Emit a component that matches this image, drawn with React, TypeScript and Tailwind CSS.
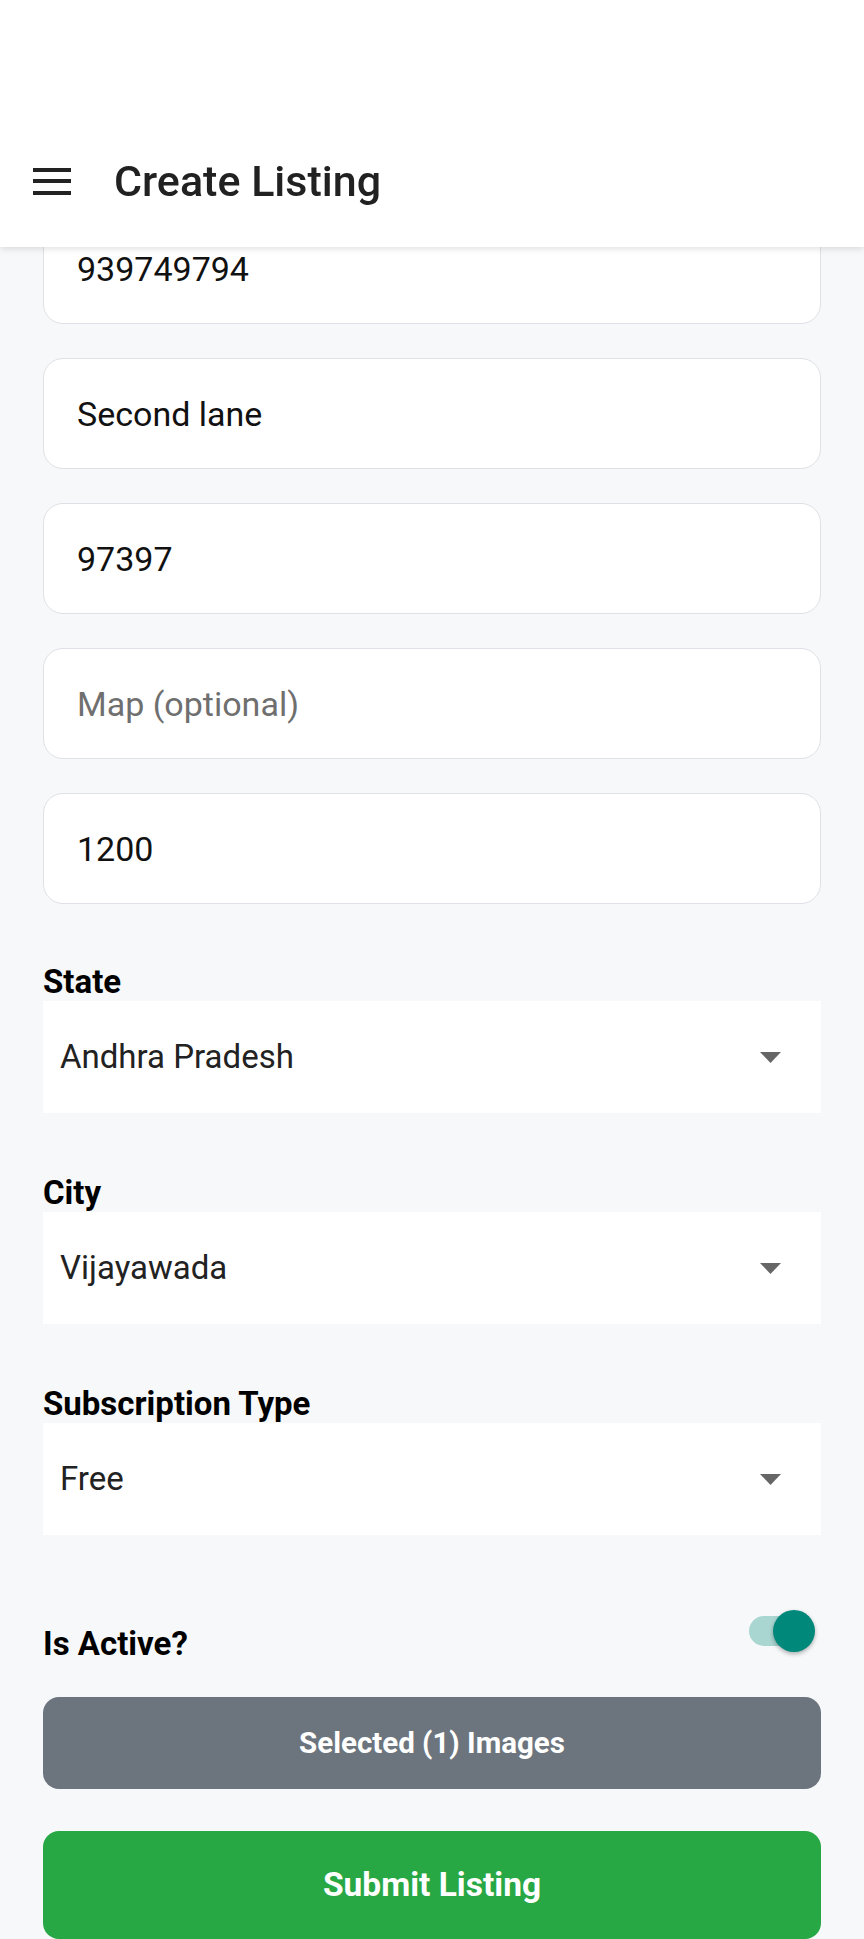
import React from "react";

const inputs = [
  { value: "939749794", placeholder: "Phone" },
  { value: "Second lane", placeholder: "Address" },
  { value: "97397", placeholder: "Pincode" },
  { value: "", placeholder: "Map (optional)" },
  { value: "1200", placeholder: "Price" },
];

const selects = [
  { label: "State", value: "Andhra Pradesh" },
  { label: "City", value: "Vijayawada" },
  { label: "Subscription Type", value: "Free" },
];

function Picker({ label, value }: { label: string; value: string }) {
  return (
    <div className="flex flex-col">
      <label className="h-[39px] text-[33px] leading-[39px] font-bold text-black">
        {label}
      </label>
      <div className="flex h-[112px] items-center justify-between bg-white pl-[17px] pr-[40px]">
        <span className="text-[33px] text-[#222222]">{value}</span>
        <svg width="21" height="11" viewBox="0 0 21 11">
          <path d="M0 0h21L10.5 11z" fill="#666666" />
        </svg>
      </div>
    </div>
  );
}

export default function App() {
  return (
    <div className="relative min-h-[1939px] w-full bg-[#f7f8fa] font-['Roboto',sans-serif]">
      {/* app bar sits over the scrolled form */}
      <header className="fixed inset-x-0 top-0 z-10 flex h-[247px] flex-col justify-end bg-white shadow-[0_2px_6px_rgba(0,0,0,0.12)]">
        <div className="flex h-[132px] items-center px-[33px]">
          <div className="flex w-[38px] flex-col gap-[7.5px]">
            <span className="h-[4px] bg-[#222222]" />
            <span className="h-[4px] bg-[#222222]" />
            <span className="h-[4px] bg-[#222222]" />
          </div>
          <h1 className="ml-[43px] text-[43px] font-medium text-[#212121]">
            Create Listing
          </h1>
        </div>
      </header>

      <main className="flex flex-col px-[43px] pt-[213px]">
        <div className="flex flex-col gap-[34px]">
          {inputs.map((f) => (
            <input
              key={f.placeholder}
              readOnly
              defaultValue={f.value}
              placeholder={f.placeholder}
              className="h-[111px] w-full rounded-[20px] border border-[#dfe1e6] bg-white px-[33px] text-[34px] text-[#111111] outline-none placeholder:text-[#6f6f6f]"
            />
          ))}
        </div>

        <div className="mt-[58px] flex flex-col gap-[60px]">
          {selects.map((s) => (
            <Picker key={s.label} label={s.label} value={s.value} />
          ))}
        </div>

        <div className="mt-[75px] flex h-[54px] justify-between">
          <span className="self-end text-[33px] leading-[40px] font-bold text-black">
            Is Active?
          </span>
          <div className="relative mr-[6px] h-[42px] w-[66px]">
            <div className="absolute top-[6px] left-0 h-[30px] w-[60px] rounded-full bg-[#aad6d1]" />
            <div className="absolute top-0 right-0 h-[42px] w-[42px] rounded-full bg-[#00897b] shadow-[0_2px_4px_rgba(0,0,0,0.3)]" />
          </div>
        </div>

        <button className="mt-[33px] flex h-[92px] w-full items-center justify-center rounded-[16px] bg-[#6c757d] text-[29.5px] font-bold text-white">
          Selected (1) Images
        </button>

        <button className="mt-[42px] flex h-[108px] w-full items-center justify-center rounded-[16px] bg-[#28a745] text-[33.5px] font-bold text-white">
          Submit Listing
        </button>
      </main>
    </div>
  );
}
